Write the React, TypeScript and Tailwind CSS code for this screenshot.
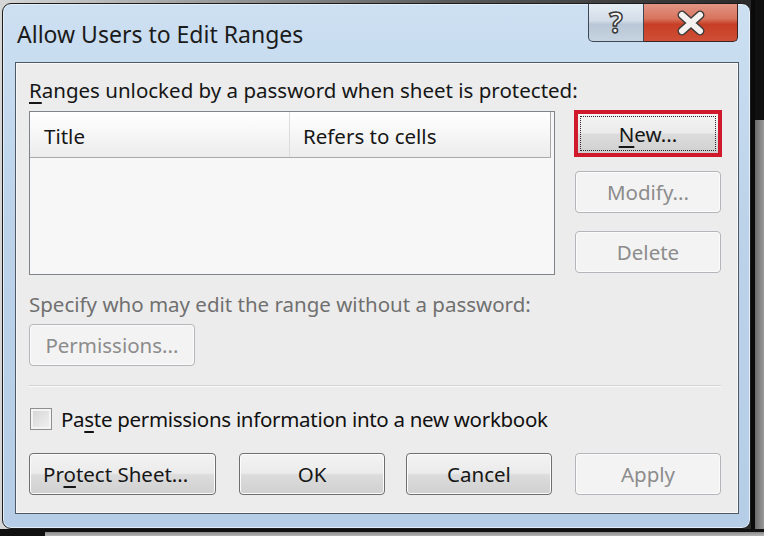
import clsx from "clsx";
import type { ReactNode } from "react";

const text = "font-['Noto_Sans',sans-serif]";

function WinButton({
  children,
  disabled,
  className,
}: {
  children: ReactNode;
  disabled?: boolean;
  className?: string;
}) {
  return (
    <div
      className={clsx(
        "h-[42px] flex items-center justify-center rounded-[4px] border text-[20.5px] leading-[28px]",
        disabled
          ? "border-[#b2b6ba] bg-[#f3f3f3] text-[#8c8c8c] shadow-[inset_0_0_0_1px_#fbfbfb]"
          : "border-[#6f6f6f] bg-[linear-gradient(#f3f3f3_0%,#ebebeb_48%,#dcdcdc_52%,#d0d0d0_100%)] text-[#161616] shadow-[inset_0_0_0_1px_#fcfcfc]",
        className
      )}
    >
      {children}
    </div>
  );
}

function CloseIcon() {
  return (
    <svg width="34" height="26" viewBox="0 0 34 26">
      <path d="M8 5 L26 21 M26 5 L8 21" stroke="#3b3b3b" strokeWidth="9" strokeLinecap="round" />
      <path d="M8 5 L26 21 M26 5 L8 21" stroke="#f4f1ee" strokeWidth="6" strokeLinecap="round" />
    </svg>
  );
}

export default function App() {
  return (
    <div className={clsx("w-[764px] h-[536px] overflow-hidden bg-[#101010] flex flex-col", text)}>
      <div className="flex h-[529px]">
        <div className="pt-[3px] pl-[2px] bg-[linear-gradient(90deg,#d6d6d6,#5a5a5a_60%,#2a2a2a)]">
          <div className="w-[749px] h-[526px] rounded-[9px] border border-[#1c1c1c] bg-[linear-gradient(#cde0f2,#bcd3ea_40%,#b5cde6)] shadow-[inset_0_0_0_1px_#e4eef8] flex flex-col pl-[12px] pr-[11px] pb-[14px]">
            {/* title bar */}
            <div className="h-[58px] flex items-start justify-between">
              <span className="mt-[15px] ml-[2px] text-[23px] leading-[30px] text-[#1b1b1b]">
                Allow Users to Edit Ranges
              </span>
              <div className="flex mr-[1px]">
                <div className="w-[56px] h-[38px] border border-t-0 border-[#3d4755] rounded-bl-[5px] bg-[linear-gradient(#e6edf4,#d3dde8_45%,#b9c7d6_55%,#c6d3e0)] flex items-center justify-center">
                  <span className="text-[28px] leading-none font-bold text-[#f5f5f5] [-webkit-text-stroke:1.5px_#3a3a3a] -mt-[2px]">
                    ?
                  </span>
                </div>
                <div className="w-[94px] h-[38px] border border-t-0 border-l-0 border-[#3a2422] rounded-br-[5px] bg-[linear-gradient(#e29585,#d8735c_40%,#c63e25_55%,#cf4f36)] flex items-center justify-center">
                  <CloseIcon />
                </div>
              </div>
            </div>

            {/* client area */}
            <div className="flex-1 border border-[#4e5965] bg-[#ececec] shadow-[inset_0_0_0_1px_#f8f8f8] pt-[13px] pl-[13px] pr-[17px] flex flex-col">
              <div className="text-[20.5px] leading-[28px] text-[#161616]">
                <span className="underline underline-offset-[4px]">R</span>anges unlocked by a password when sheet is protected:
              </div>

              <div className="mt-[6px] flex gap-[20px]">
                <div className="mt-[1px] w-[526px] h-[164px] border border-[#7f848a] bg-[#f7f7f7] flex flex-col">
                  <div className="w-[521px] h-[46px] flex border-b border-r border-[#a9a9a9] bg-[linear-gradient(#ffffff,#f6f6f6_50%,#ececec)] text-[20.5px] leading-[28px] text-[#161616]">
                    <div className="w-[260px] pl-[14px] pt-[10px] border-r border-[#dcdcdc]">Title</div>
                    <div className="flex-1 pl-[13px] pt-[10px]">Refers to cells</div>
                  </div>
                </div>

                <div className="w-[146px] flex flex-col">
                  <div className="h-[47px] border-[4px] border-[#d0192b] -ml-[1px] -mr-[1px]">
                    <div className="h-full bg-[linear-gradient(#f3f3f3_0%,#ebebeb_48%,#dcdcdc_52%,#d0d0d0_100%)] p-[2px]">
                      <div className="h-full border border-dotted border-[#2a2a2a] flex items-center justify-center text-[20.5px] leading-[28px] text-[#161616]">
                        <span>
                          <span className="underline underline-offset-[4px]">N</span>ew...
                        </span>
                      </div>
                    </div>
                  </div>
                  <WinButton disabled className="mt-[14px]">
                    Modify...
                  </WinButton>
                  <WinButton disabled className="mt-[18px]">
                    Delete
                  </WinButton>
                </div>
              </div>

              <div className="mt-[15px] text-[20.5px] leading-[28px] text-[#707070]">
                Specify who may edit the range without a password:
              </div>
              <WinButton disabled className="mt-[6px] w-[166px]">
                Permissions...
              </WinButton>

              <div className="mt-[19px] h-[2px] border-t border-[#d4d4d4] bg-[#fafafa]" />

              <div className="mt-[18px] h-[28px] flex items-center gap-[9px]">
                <div className="ml-[1px] w-[22px] h-[22px] border border-[#8e8f8f] bg-[linear-gradient(135deg,#d4d4d4,#f2f2f2)] shadow-[inset_0_0_0_2px_#f4f4f4]" />
                <span className="text-[20.5px] leading-[28px] text-[#111111] tracking-[-0.3px]">
                  Pa<span className="underline underline-offset-[4px]">s</span>te permissions information into a new workbook
                </span>
              </div>

              <div className="mt-[20px] flex">
                <WinButton className="w-[187px] justify-start pl-[13px]">
                  <span>
                    Pr<span className="underline underline-offset-[4px]">o</span>tect Sheet...
                  </span>
                </WinButton>
                <WinButton className="ml-[23px] w-[146px]">OK</WinButton>
                <WinButton className="ml-[21px] w-[146px]">Cancel</WinButton>
                <WinButton disabled className="ml-[23px] w-[146px]">
                  Apply
                </WinButton>
              </div>
            </div>
          </div>
        </div>
        <div className="flex-1 flex">
          <div className="w-[4px] bg-[#0a0a0a]" />
          <div className="flex-1 mt-[120px] bg-[linear-gradient(90deg,#6a6a6a,#9a9a9a)]" />
        </div>
      </div>
      <div className="flex-1 flex">
        <div className="ml-[45px] mt-[3px] flex-1 bg-[linear-gradient(#8a8a8a,#b5b5b5)]" />
      </div>
    </div>
  );
}
